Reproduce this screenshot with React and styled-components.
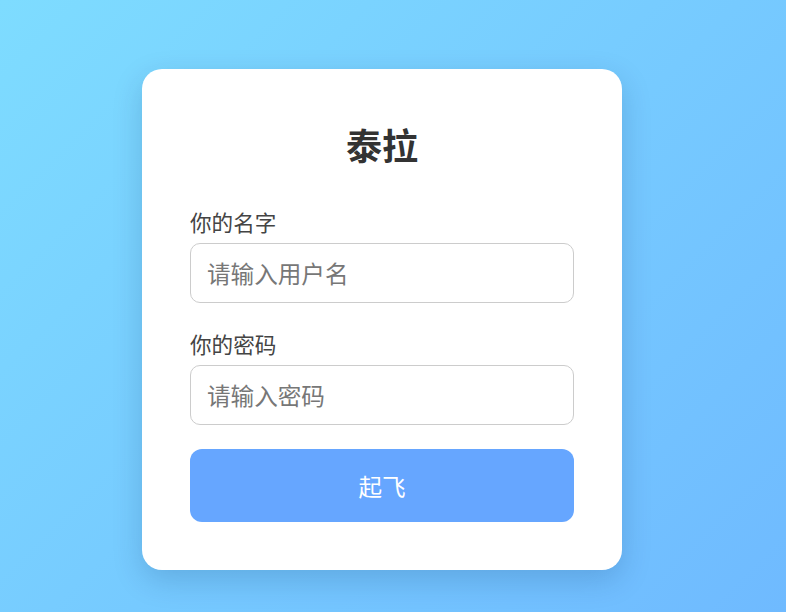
import React from "react";
import styled, { createGlobalStyle } from "styled-components";

const Global = createGlobalStyle`
  html, body { margin: 0; padding: 0; }
  body {
    font-family: "Noto Sans CJK SC", "Noto Sans", sans-serif;
    background: linear-gradient(135deg, #7edcff 0%, #6fbaff 100%);
    min-height: 100vh;
  }
`;

const Page = styled.div`
  min-height: 612px;
  box-sizing: border-box;
  display: flex;
  justify-content: center;
  align-items: flex-start;
  padding: 69px 22px 0 0;
`;

const Card = styled.form`
  width: 480px;
  box-sizing: border-box;
  background: #fff;
  border-radius: 20px;
  padding: 50px 48px 48px;
  box-shadow: 0 10px 30px rgba(0, 40, 90, 0.18);
  display: flex;
  flex-direction: column;
`;

const Title = styled.h2`
  margin: 0 0 41px;
  text-align: center;
  font-size: 36px;
  line-height: 50px;
  font-weight: 700;
  color: #333;
`;

const Field = styled.div`
  display: flex;
  flex-direction: column;
  margin-bottom: ${(p) => p.$mb || 0}px;
`;

const Label = styled.label`
  font-size: 21.6px;
  line-height: 23px;
  color: #444;
  margin-bottom: 10px;
`;

const Input = styled.input`
  box-sizing: border-box;
  height: 60px;
  width: 100%;
  border: 1px solid #ccc;
  border-radius: 10px;
  padding: 0 16px;
  font-family: inherit;
  font-size: 23.6px;
  color: #333;
  outline: none;
  &::placeholder { color: #777; }
`;

const Button = styled.button`
  height: 73px;
  border: none;
  border-radius: 12px;
  background: #66a6ff;
  color: #fff;
  font-family: inherit;
  font-size: 23.6px;
  cursor: pointer;
`;

export default function App() {
  return (
    <>
      <Global />
      <Page>
        <Card onSubmit={(e) => e.preventDefault()}>
          <Title>泰拉</Title>
          <Field $mb={29}>
            <Label>你的名字</Label>
            <Input placeholder="请输入用户名" />
          </Field>
          <Field $mb={24}>
            <Label>你的密码</Label>
            <Input type="password" placeholder="请输入密码" />
          </Field>
          <Button type="submit">起飞</Button>
        </Card>
      </Page>
    </>
  );
}
